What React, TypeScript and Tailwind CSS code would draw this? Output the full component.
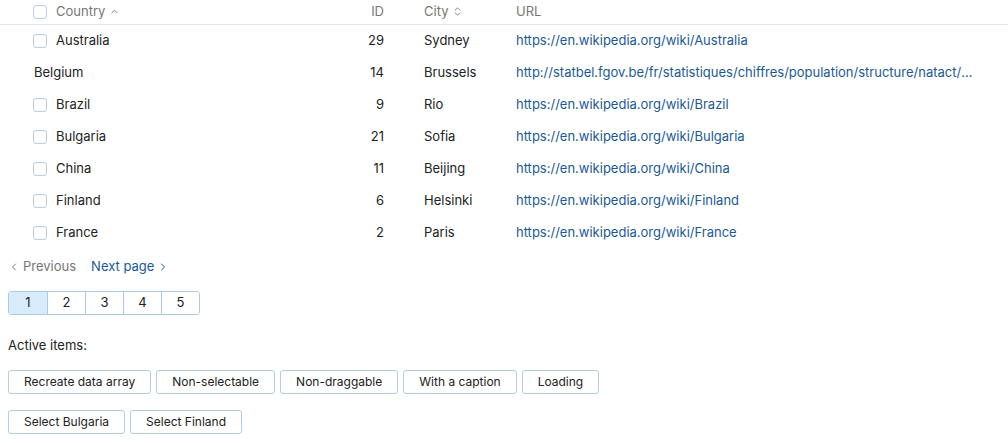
import { ChevronUp, ChevronsUpDown, ChevronLeft, ChevronRight } from 'lucide-react'

const rows = [
  { country: 'Australia', id: 29, city: 'Sydney', url: 'https://en.wikipedia.org/wiki/Australia', selectable: true },
  { country: 'Belgium', id: 14, city: 'Brussels', url: 'http://statbel.fgov.be/fr/statistiques/chiffres/population/structure/natact/beljour/', selectable: false },
  { country: 'Brazil', id: 9, city: 'Rio', url: 'https://en.wikipedia.org/wiki/Brazil', selectable: true },
  { country: 'Bulgaria', id: 21, city: 'Sofia', url: 'https://en.wikipedia.org/wiki/Bulgaria', selectable: true },
  { country: 'China', id: 11, city: 'Beijing', url: 'https://en.wikipedia.org/wiki/China', selectable: true },
  { country: 'Finland', id: 6, city: 'Helsinki', url: 'https://en.wikipedia.org/wiki/Finland', selectable: true },
  { country: 'France', id: 2, city: 'Paris', url: 'https://en.wikipedia.org/wiki/France', selectable: true },
]

const actions = ['Recreate data array', 'Non-selectable', 'Non-draggable', 'With a caption', 'Loading']

function Checkbox() {
  return <span className="w-[14px] h-[14px] rounded-[3px] border border-[#b9d0e6] bg-white shrink-0" />
}

function Btn({ children }: { children: string }) {
  return (
    <button className="h-[24px] px-[15px] rounded-[3px] border border-[#b3cbe3] bg-white text-[12px] text-[#222]">
      {children}
    </button>
  )
}

export default function App() {
  return (
    <div className="w-[1008px] h-[443px] bg-white text-[13px] text-[#222] overflow-hidden" style={{ fontFamily: 'Inter, "Liberation Sans", sans-serif' }}>
      {/* header */}
      <div className="flex items-center h-[25px] border-b border-[#dfe5ec] text-[#777] pb-[1px]">
        <div className="w-[360px] flex items-center pl-[33px] gap-[9px]">
          <Checkbox />
          <span className="flex items-center gap-[4px]">
            Country <ChevronUp size={11} strokeWidth={2} />
          </span>
        </div>
        <div className="w-[24px] text-right">ID</div>
        <div className="w-[92px] ml-[40px] flex items-center gap-[4px]">
          City <ChevronsUpDown size={11} strokeWidth={2} />
        </div>
        <div className="flex-1">URL</div>
      </div>

      {/* rows */}
      {rows.map((r) => (
        <div key={r.country} className="flex items-center h-[32px]">
          <div className="w-[360px] flex items-center gap-[9px] pl-[33px]">
            {r.selectable ? <Checkbox /> : null}
            <span className={r.selectable ? '' : 'ml-[1px]'}>{r.country}</span>
          </div>
          <div className="w-[24px] text-right">{r.id}</div>
          <div className="w-[92px] ml-[40px]">{r.city}</div>
          <div className="flex-1 min-w-0 pr-[28px]">
            <div className="truncate text-[#1a5a96]">{r.url}</div>
          </div>
        </div>
      ))}

      {/* pagination */}
      <div className="flex items-center gap-[15px] pl-[8px] mt-[8px] h-[20px]">
        <span className="flex items-center gap-[3px] text-[#777]">
          <ChevronLeft size={12} strokeWidth={2} /> Previous
        </span>
        <span className="flex items-center gap-[3px] text-[#1a5a96]">
          Next page <ChevronRight size={12} strokeWidth={2} />
        </span>
      </div>

      <div className="flex ml-[8px] mt-[14px] w-max border border-[#a9cbe8] rounded-[3px] overflow-hidden">
        {[1, 2, 3, 4, 5].map((n) => (
          <div
            key={n}
            className={`w-[38px] h-[22px] flex items-center justify-center border-l border-[#a9cbe8] first:border-l-0 ${n === 1 ? 'bg-[#d8ebfb]' : 'bg-white'}`}
          >
            {n}
          </div>
        ))}
      </div>

      <div className="pl-[8px] mt-[21px]">Active items:</div>

      <div className="flex gap-[5px] pl-[8px] mt-[14px]">
        {actions.map((a) => (
          <Btn key={a}>{a}</Btn>
        ))}
      </div>
      <div className="flex gap-[5px] pl-[8px] mt-[16px]">
        <Btn>Select Bulgaria</Btn>
        <Btn>Select Finland</Btn>
      </div>
    </div>
  )
}
